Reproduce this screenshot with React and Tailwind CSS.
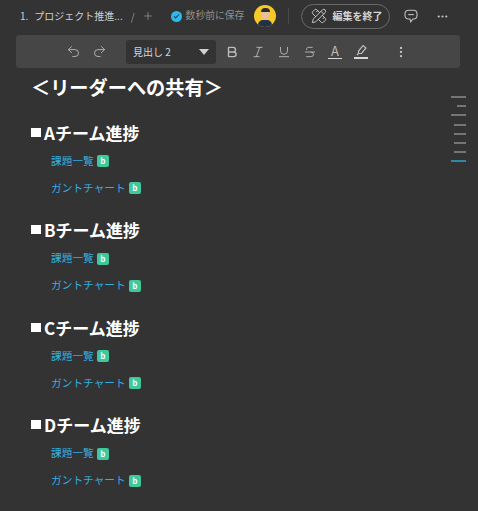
import React from "react";
import { Undo2, Redo2, Bold, Italic, Underline, Strikethrough, EllipsisVertical, Ellipsis, Plus, Check, PencilRuler } from "lucide-react";

const font = { fontFamily: '"Noto Sans CJK JP", "Liberation Sans", sans-serif' };

function Badge() {
  return (
    <span className="ml-[3px] inline-flex h-[12px] w-[12px] items-center justify-center rounded-[2px] bg-[#3ec99c] text-[8px] font-bold leading-none text-white">b</span>
  );
}

function Section({ letter }) {
  return (
    <section className="h-[97.5px] flex flex-col">
      <h2 className="flex h-[24px] items-center text-[17px] font-bold leading-none text-white">
        <span className="mr-[3px] inline-block h-[9px] w-[10px] bg-white" />
        {letter}チーム進捗
      </h2>
      <div className="mt-[9px] ml-[20px] flex h-[16px] items-center text-[10.7px] leading-none text-[#35aee2]">課題一覧<Badge /></div>
      <div className="mt-[11px] ml-[20px] flex h-[16px] items-center text-[10.7px] leading-none text-[#35aee2]">ガントチャート<Badge /></div>
    </section>
  );
}

function TextA() {
  return (
    <span className="flex w-[14px] flex-col items-center">
      <span className="text-[13px] leading-[13px] text-[#bcbcbc]">A</span>
      <span className="mt-[1px] h-[1.5px] w-[14px] bg-[#d8d8d8]" />
    </span>
  );
}

function Marker() {
  return (
    <span className="flex w-[14px] flex-col items-center">
      <svg width="13" height="12" viewBox="0 0 13 12" fill="none" stroke="#bcbcbc" strokeWidth="1.2">
        <path d="M8 1.5 L11 4 L6.5 9.5 L3.5 9.5 L3.5 7 Z" />
        <path d="M3.5 9.5 L2 11" />
      </svg>
      <span className="mt-[1px] h-[1.5px] w-[14px] bg-[#d8d8d8]" />
    </span>
  );
}

function Avatar() {
  return (
    <span className="relative block h-[22px] w-[22px] shrink-0 overflow-hidden rounded-full bg-[#f6c927]">
      <span className="absolute left-[7px] top-[4px] h-[10px] w-[8px] rounded-full bg-[#e6bfa0]" />
      <span className="absolute left-[6.5px] top-[3px] h-[4px] w-[9px] rounded-t-full bg-[#2a2a2a]" />
      <span className="absolute bottom-[-2px] left-[4px] h-[9px] w-[14px] rounded-t-[5px] bg-[#24304a]" />
    </span>
  );
}

function Comment() {
  return (
    <svg className="ml-[14px] shrink-0" width="14" height="14" viewBox="0 0 14 14" fill="none" stroke="#c0c0c0" strokeWidth="1.1">
      <path d="M4.5 1.2 H9.5 C11.5 1.2 13 2.7 13 4.7 V6.5 C13 8.5 11.5 10 9.5 10 H8.8 L6.8 12.8 L6 10 H4.5 C2.5 10 1 8.5 1 6.5 V4.7 C1 2.7 2.5 1.2 4.5 1.2 Z" />
      <path d="M4.2 5.6 H9.8" />
    </svg>
  );
}

export default function App() {
  return (
    <div className="h-[511px] w-[478px] overflow-hidden bg-[#333333]" style={font}>
      <header className="flex h-[32px] items-center whitespace-nowrap pl-[20px] text-[#c4c4c4]">
        <span className="text-[10px] leading-none text-[#cfcfcf]">1.</span>
        <span className="ml-[6px] text-[10px] leading-none text-[#cfcfcf]">プロジェクト推進...</span>
        <span className="ml-[8px] text-[10px] text-[#999]">/</span>
        <Plus className="ml-[7px] h-[12px] w-[12px] shrink-0 text-[#969696]" strokeWidth={1.5} />
        <span className="ml-[17px] flex h-[11px] w-[11px] shrink-0 items-center justify-center rounded-full bg-[#2cb9f0]">
          <Check className="h-[7px] w-[7px] text-[#333]" strokeWidth={3.5} />
        </span>
        <span className="ml-[4px] text-[9.8px] leading-none text-[#8f8f8f]">数秒前に保存</span>
        <span className="ml-[10px]"><Avatar /></span>
        <span className="ml-[12px] h-[16px] w-px shrink-0 bg-[#4a4a4a]" />
        <span className="ml-[12px] flex h-[25px] w-[89px] shrink-0 items-center rounded-full border border-[#6a6a6a] pl-[9px]">
          <PencilRuler className="h-[16px] w-[16px] shrink-0 text-[#d0d0d0]" strokeWidth={1.4} />
          <span className="ml-[5px] text-[10px] font-bold leading-none text-[#d4d4d4]">編集を終了</span>
        </span>
        <Comment />
        <Ellipsis className="ml-[18px] h-[13px] w-[13px] shrink-0 text-[#c8c8c8]" strokeWidth={2} />
      </header>

      <div className="ml-[16px] mt-[3px] flex h-[33px] w-[444px] items-center rounded-[3px] bg-[#464646] text-[#bcbcbc]">
        <Undo2 className="ml-[50px] h-[15px] w-[15px] text-[#b4b4b4]" strokeWidth={1.5} />
        <Redo2 className="ml-[11px] h-[15px] w-[15px] text-[#b4b4b4]" strokeWidth={1.5} />
        <span className="ml-[19px] flex h-[24px] w-[90px] items-center rounded-[3px] bg-[#333333] pl-[7px] pr-[7px] text-[10px] leading-none text-[#d6d6d6]">
          見出し 2
          <span className="ml-auto h-0 w-0 border-x-[5px] border-t-[6px] border-x-transparent border-t-[#d0d0d0]" />
        </span>
        <Bold className="ml-[9px] h-[14px] w-[14px]" strokeWidth={2.4} />
        <Italic className="ml-[12px] h-[14px] w-[14px]" strokeWidth={1.5} />
        <Underline className="ml-[12px] h-[14px] w-[14px]" strokeWidth={1.5} />
        <Strikethrough className="ml-[12px] h-[14px] w-[14px]" strokeWidth={1.5} />
        <span className="ml-[11px]"><TextA /></span>
        <span className="ml-[12px]"><Marker /></span>
        <EllipsisVertical className="ml-[26px] h-[14px] w-[14px] text-[#c0c0c0]" strokeWidth={2} />
      </div>

      <main className="relative pl-[31px] pt-px">
        <h1 className="h-[36px] text-[19.2px] font-bold leading-[36px] text-white">＜リーダーへの共有＞</h1>
        <div className="mt-[15px]">
          <Section letter="A" />
          <Section letter="B" />
          <Section letter="C" />
          <Section letter="D" />
        </div>
        <div className="absolute left-[451px] top-[28px] flex w-[15px] flex-col items-end gap-[7.2px]">
          {[15, 9, 15, 12, 12, 12, 12].map((w, i) => (
            <span key={i} className="h-[2px] bg-[#757575]" style={{ width: w }} />
          ))}
          <span className="h-[2px] w-[15px] bg-[#2f88a6]" />
        </div>
      </main>
    </div>
  );
}
